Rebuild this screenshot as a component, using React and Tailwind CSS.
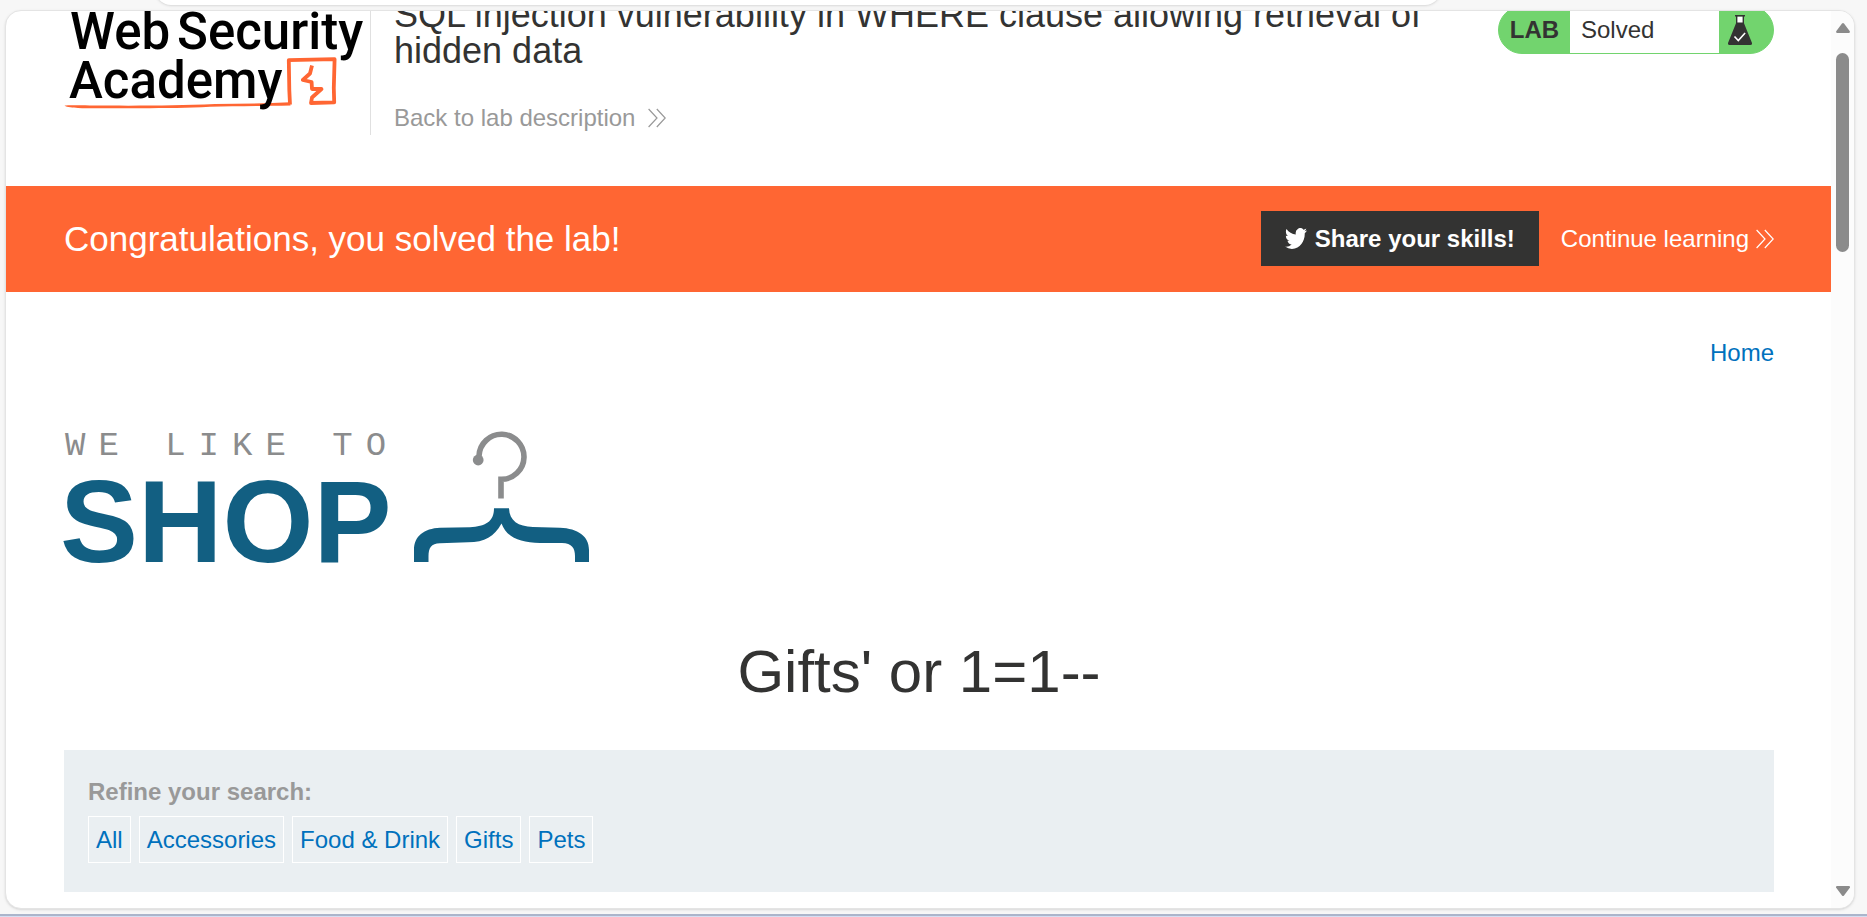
import React from "react";

const categories = ["All", "Accessories", "Food & Drink", "Gifts", "Pets"];

function AcademyLogo() {
  return (
    <svg width="304" height="122" viewBox="60 -6 304 122" role="img" aria-label="Web Security Academy">
      <path d="M64.500 105.500C70 104.800 90 105.600 110 105.600C150 105.800 180 105.400 215 104C240 103.800 265 103.600 290 102.300L290.500 105.500C265 106 235 106.200 210 106.800C185 108.300 160 108.200 130 108.200C110 108.200 90 108.600 78 108C73 107.500 67 107.600 64.500 105.500Z" fill="#ff6633" />
      <path
        d="M290 104.500L289.300 90L288.800 60.200L334.600 59.200L333.800 88L334.200 102.300L311 103L312 97.500L321.500 89L312 89L311.600 82L302.800 80L310 73.500L312 65.500"
        fill="none"
        stroke="#ff6633"
        strokeWidth="3.800"
        strokeLinejoin="round"
      />
      <g fill="#000" fontFamily="Roboto, 'Liberation Sans', sans-serif" fontWeight="500" fontSize="51">
        <text x="70" y="49">Web</text>
        <text x="177" y="49">Security</text>
        <text x="69" y="98">Academy</text>
      </g>
    </svg>
  );
}

function DoubleChevron() {
  return (
    <svg width="18" height="20" viewBox="0 0 18 20" fill="none" stroke="currentColor" strokeWidth="1.2" aria-hidden="true">
      <path d="M.6 1 9 10 .6 19M8.8 1 17.2 10 8.8 19" />
    </svg>
  );
}

function Flask() {
  return (
    <svg width="24" height="31" viewBox="0 0 24 31" aria-hidden="true">
      <path d="M8.5 1.5h7v7h-7z" fill="#fff" />
      <path d="M7 0h10v1.6h-1v6.6L24 28q.3 2-1.600 2H1.600Q-.3 30 0 28L8 8.200V1.600H7zM9.400 1.600v6h5.200v-6z" fill="#333332" />
      <path d="m6.500 21.500 3.800 4 6.800-7.500" fill="none" stroke="#fff" strokeWidth="1.600" />
    </svg>
  );
}

function Bird() {
  return (
    <svg width="22" height="21" viewBox="0 2.200 24 19.600" preserveAspectRatio="none" fill="currentColor" aria-hidden="true">
      <path d="M23.950 4.570a10 10 0 0 1-2.820.77 4.960 4.960 0 0 0 2.160-2.720c-.95.55-2 .95-3.130 1.180a4.920 4.920 0 0 0-8.380 4.480C7.690 8.090 4.070 6.130 1.640 3.160a4.820 4.820 0 0 0-.67 2.480c0 1.710.87 3.210 2.190 4.100a4.900 4.900 0 0 1-2.230-.62v.06a4.920 4.920 0 0 0 3.950 4.830 5 5 0 0 1-2.210.08 4.940 4.940 0 0 0 4.600 3.420A9.870 9.870 0 0 1 0 19.540a13.990 13.990 0 0 0 7.550 2.210c9.050 0 14-7.500 14-13.980 0-.21 0-.42-.02-.63a9.940 9.940 0 0 0 2.460-2.550z" />
    </svg>
  );
}

function ShopLogo() {
  return (
    <svg width="530" height="136" viewBox="62 430 530 136" role="img" aria-label="We like to shop">
      <text x="65" y="455" fill="#8b8c8d" fontFamily="'Liberation Mono', monospace" fontSize="34" className="tracking-[13px]">
        WE LIKE TO
      </text>
      <text x="60" y="562" fill="#125f82" fontFamily="'Liberation Sans', Arial, sans-serif" fontWeight="700" fontSize="117">
        SHOP
      </text>
      <path d="M479 456A22.500 22.500 0 1 1 501 479.300V498.500" fill="none" stroke="#8b8c8d" strokeWidth="5.600" />
      <circle cx="478.200" cy="460" r="5.400" fill="#8b8c8d" />
      <path
        d="M494 508.300H509C509.500 521 518 526.500 533 527L560 527.700C578 528.500 589 536 589 550V562H575V556C575 548 572 543.500 562 543L540 543C520 542.500 507 538 501.500 523.500C494 537 485 542 468 542.300L440 543.200C431 543.500 428.500 548 428.500 556V562H414V550C414 536 424 528.500 440 527.700L470 527.200C485 526.500 494 522 494 508.300Z"
        fill="#125f82"
      />
    </svg>
  );
}

export default function App() {
  return (
    <div className="flex h-screen flex-col overflow-hidden bg-[#f7f7f7] font-['Liberation_Sans',Arial,sans-serif] text-2xl leading-9 text-[#333332]">
      <div className="flex h-[10px] shrink-0 items-end pr-[426px] pb-[5px] pl-[155px]">
        <div className="h-12 w-full shrink-0 rounded-2xl bg-white shadow-sm" />
      </div>

      <div className="mr-3 ml-[5px] flex min-h-0 flex-1 overflow-hidden rounded-2xl border border-[#e4e4e4] bg-white shadow-sm">
        <div className="min-w-0 flex-1 overflow-hidden">
          <header className="-mt-[17px] flex h-48 items-start pr-[57px] pl-[54px]">
            <div className="flex h-[141px] shrink-0 border-r border-[#e0e0e0] pr-[6px]">
              <AcademyLogo />
            </div>
            <div className="min-w-0 flex-1 pt-[3px] pl-[23px]">
              <h2 className="max-w-[1060px] text-4xl leading-9">
                SQL injection vulnerability in WHERE clause allowing retrieval of hidden data
              </h2>
              <a href="#description" className="mt-[31px] inline-flex items-center gap-[13px] text-[#999]">
                Back to lab description
                <DoubleChevron />
              </a>
            </div>
            <div className="mt-3 flex h-12 w-[276px] shrink-0 overflow-hidden rounded-3xl border border-[#72d46e] bg-[#72d46e]">
              <p className="flex w-[71px] items-center justify-center font-bold">LAB</p>
              <p className="flex flex-1 items-center bg-white pl-[11px]">Solved</p>
              <span className="flex w-[54px] items-center pl-[9px]">
                <Flask />
              </span>
            </div>
          </header>

          <section className="flex h-[106px] items-center justify-between bg-[#ff6633] pr-[57px] pb-px pl-[58px] text-white">
            <h4 className="text-[35px] leading-10">Congratulations, you solved the lab!</h4>
            <div className="flex items-center gap-[22px]">
              <button type="button" className="flex h-[55px] items-center gap-2 bg-[#333332] px-6 font-bold">
                <Bird />
                Share your skills!
              </button>
              <a href="#learning" className="flex items-center gap-[7px]">
                Continue learning
                <DoubleChevron />
              </a>
            </div>
          </section>

          <main className="pr-[57px] pl-[58px]">
            <nav className="flex justify-end pt-[43px]">
              <a href="#home" className="text-[#0071bd]">Home</a>
            </nav>
            <div className="-ml-0.5 pt-[59px]">
              <ShopLogo />
            </div>
            <h1 className="mt-[76px] text-center text-6xl">Gifts&apos; or 1=1--</h1>
            <section className="mt-12 h-[142px] bg-[#eaeff2] px-6 pt-6">
              <p className="font-bold text-[#999]">Refine your search:</p>
              <div className="mt-[6px] flex gap-2">
                {categories.map((c) => (
                  <a key={c} href="#filter" className="flex h-[47px] items-center border border-white px-[7px] text-[#0071bd]">
                    {c}
                  </a>
                ))}
              </div>
            </section>
          </main>
        </div>

        <div className="flex w-[23px] shrink-0 flex-col items-center bg-[#fcfcfc] pt-3 pb-3" aria-hidden="true">
          <svg width="14" height="10" viewBox="0 0 14 10" fill="#8b8b8b">
            <path d="M6 .6q1-1 2 0l6 8q0 1.400-1 1.400H1Q0 10 0 8.600z" />
          </svg>
          <div className="mt-5 h-[199px] w-[13px] rounded-full bg-[#8b8b8b]" />
          <svg className="mt-auto" width="14" height="10" viewBox="0 0 14 10" fill="#8b8b8b">
            <path d="M6 9.400q1 1 2 0l6-8Q14 0 13 0H1Q0 0 0 1.400z" />
          </svg>
        </div>
      </div>

      <div className="mt-[5px] h-[3px] shrink-0 border-t-2 border-[#abb5cb] bg-[#d5dff3]" />
    </div>
  );
}
